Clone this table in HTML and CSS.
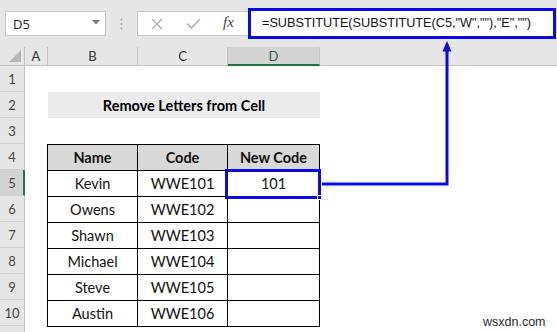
FILE: index.html
```html
<!DOCTYPE html>
<html>
<head>
<meta charset="utf-8">
<link rel="stylesheet" href="styles.css">
</head>
<body>
<div class="app">
  <div class="toolbar">
    <div class="namebox">
      <span class="nb-text">D5</span>
      <svg class="caret" width="8" height="5" viewBox="0 0 8 5"><path d="M0 0 L8 0 L4 4.5 Z" fill="#7a7a7a"/></svg>
    </div>
    <div class="dots">
      <svg width="3" height="12" viewBox="0 0 3 12"><circle cx="1.5" cy="1.5" r="1" fill="#a8a8a8"/><circle cx="1.5" cy="6" r="1" fill="#a8a8a8"/><circle cx="1.5" cy="10.5" r="1" fill="#a8a8a8"/></svg>
    </div>
    <div class="fxbox">
      <svg class="ico-x" width="12" height="12" viewBox="0 0 12 12"><path d="M1 1 L11 11 M11 1 L1 11" stroke="#ababab" stroke-width="1.3" fill="none"/></svg>
      <svg class="ico-ok" width="15" height="11" viewBox="0 0 15 11"><path d="M1 5.5 L5.5 10 L14 1" stroke="#ababab" stroke-width="1.4" fill="none"/></svg>
      <span class="fx">fx</span>
    </div>
    <div class="formula">=SUBSTITUTE(SUBSTITUTE(C5,"W",""),"E","")</div>
  </div>

  <div class="sheet">
    <div class="corner">
      <svg width="12" height="12" viewBox="0 0 12 12"><path d="M12 0 L12 12 L0 12 Z" fill="#b7b7b7"/></svg>
    </div>
    <div class="ch ch-a">A</div>
    <div class="ch ch-b">B</div>
    <div class="ch ch-c">C</div>
    <div class="ch ch-d">D</div>
    <div class="ch ch-rest"></div>

    <div class="rowheads">
      <div class="rh">1</div>
      <div class="rh">2</div>
      <div class="rh">3</div>
      <div class="rh">4</div>
      <div class="rh rh-active">5</div>
      <div class="rh">6</div>
      <div class="rh">7</div>
      <div class="rh">8</div>
      <div class="rh">9</div>
      <div class="rh">10</div>
      <div class="rh rh-last"></div>
    </div>

    <div class="title">Remove Letters from Cell</div>

    <table class="data">
      <colgroup><col class="w90"><col class="w90"><col class="w92"></colgroup>
      <tr class="head"><th>Name</th><th>Code</th><th>New Code</th></tr>
      <tr><td>Kevin</td><td>WWE101</td><td class="active">101<span class="handle"></span></td></tr>
      <tr><td>Owens</td><td>WWE102</td><td></td></tr>
      <tr><td>Shawn</td><td>WWE103</td><td></td></tr>
      <tr><td>Michael</td><td>WWE104</td><td></td></tr>
      <tr><td>Steve</td><td>WWE105</td><td></td></tr>
      <tr><td>Austin</td><td>WWE106</td><td></td></tr>
    </table>
  </div>

  <svg class="arrow" width="557" height="332" viewBox="0 0 557 332">
    <path d="M322 184 L447 184 L447 50" stroke="#0a0ae6" stroke-width="3" fill="none"/>
    <path d="M447 41 L442.5 51.5 L451.5 51.5 Z" fill="#0a0ae6"/>
  </svg>
  <div class="watermark">wsxdn.com</div>
</div>
</body>
</html>
```

FILE: styles.css
```css
* { box-sizing: border-box; }
html, body { margin: 0; padding: 0; }
body { width: 557px; height: 332px; overflow: hidden; background: #fff; }

.app {
  position: relative;
  width: 557px;
  height: 332px;
  overflow: hidden;
  font-family: Lato, "Liberation Sans", sans-serif;
}

/* toolbar */
.toolbar {
  height: 47px;
  background: #e6e6e6;
  display: flex;
  align-items: flex-start;
}
.namebox {
  margin-left: 5px;
  margin-top: 11px;
  width: 101px;
  height: 25px;
  background: #fff;
  border: 1px solid #c9c9c9;
  display: flex;
  align-items: center;
  padding-left: 7px;
  padding-right: 5px;
}
.nb-text {
  font-family: "Open Sans", "Liberation Sans", sans-serif;
  font-size: 13px;
  color: #222;
  flex: 1;
}
.caret { display: block; margin-top: -2px; }
.dots {
  width: 31px;
  height: 47px;
  display: flex;
  justify-content: center;
  padding-top: 18px;
}
.dots svg { display: block; }
.fxbox {
  margin-top: 11px;
  width: 113px;
  height: 25px;
  background: #fff;
  border: 1px solid #c9c9c9;
  display: flex;
  align-items: center;
  padding-left: 13px;
}
.ico-x { display: block; }
.ico-ok { display: block; margin-left: 23px; }
.fx {
  margin-left: 22px;
  font-family: "Liberation Serif", serif;
  font-style: italic;
  font-size: 15px;
  color: #444;
  margin-top: -2px;
}
.formula {
  margin-left: -2px;
  margin-top: 8px;
  width: 308px;
  height: 31px;
  background: #fff;
  border: 3px solid #0a0ae6;
  font-family: "Liberation Sans", Arial, sans-serif;
  font-size: 12.7px;
  color: #111;
  padding-left: 11px;
  line-height: 25px;
  white-space: nowrap;
}

/* sheet */
.sheet {
  display: grid;
  grid-template-columns: 25px 23px 90px 90px 92px 1fr;
  grid-template-rows: 19px repeat(10, 26px) 6px;
  background: #fff;
}
.corner {
  grid-column: 1; grid-row: 1;
  background: #e6e6e6;
  border-right: 1px solid #c4c4c4;
  border-bottom: 1px solid #c4c4c4;
  display: flex;
  align-items: flex-end;
  justify-content: flex-end;
  padding: 0 3px 3px 0;
}
.corner svg { display: block; }
.ch {
  grid-row: 1;
  background: #e6e6e6;
  border-right: 1px solid #c4c4c4;
  border-bottom: 1px solid #c4c4c4;
  font-size: 13px;
  color: #333;
  display: flex;
  align-items: center;
  justify-content: center;
}
.ch-a { grid-column: 2; }
.ch-b { grid-column: 3; }
.ch-c { grid-column: 4; }
.ch-d {
  grid-column: 5;
  background: #d3d3d3;
  border-bottom: 2px solid #217346;
  color: #2f5a3c;
}
.ch-rest { grid-column: 6; border-right: none; }

.rowheads {
  grid-column: 1;
  grid-row: 2 / 13;
  display: flex;
  flex-direction: column;
}
.rh {
  height: 26px;
  flex: none;
  background: #e6e6e6;
  border-right: 1px solid #c4c4c4;
  border-bottom: 1px solid #d0d0d0;
  font-size: 13px;
  color: #444;
  display: flex;
  align-items: center;
  justify-content: center;
}
.rh-last { height: 6px; border-bottom: none; }
.rh-active {
  background: #d3d3d3;
  border-right: 2px solid #217346;
  padding-left: 1px;
}

.title {
  grid-column: 3 / 6;
  grid-row: 3;
  background: #ebebeb;
  font-weight: bold;
  font-size: 14.5px;
  color: #000;
  display: flex;
  align-items: center;
  justify-content: center;
}

.data {
  grid-column: 3 / 6;
  grid-row: 5 / 12;
  border-collapse: collapse;
  width: 273px;
  margin-left: -1px;
  table-layout: fixed;
  font-size: 14.5px;
  color: #111;
}
.w90 { width: 90px; }
.w92 { width: 92px; }
.data th, .data td {
  border: 1px solid #000;
  height: 26px;
  padding: 0;
  text-align: center;
  vertical-align: middle;
}
.data th { background: #d9d9d9; font-weight: bold; }
.data td.active { position: relative; }
.data td.active::after {
  content: "";
  position: absolute;
  top: -2px; left: -3px; right: -2px; bottom: -3px;
  border: 3px solid #0a0ae6;
}
.handle {
  position: absolute;
  right: -3px;
  bottom: -4px;
  width: 5px;
  height: 5px;
  background: #0a0ae6;
  border: 1px solid #fff;
  z-index: 2;
}

.arrow {
  position: absolute;
  left: 0; top: 0;
  pointer-events: none;
}
.watermark {
  position: absolute;
  left: 483px;
  top: 315px;
  font-family: "Liberation Sans", Arial, sans-serif;
  font-size: 12.5px;
  color: #2a2a2a;
}
```
